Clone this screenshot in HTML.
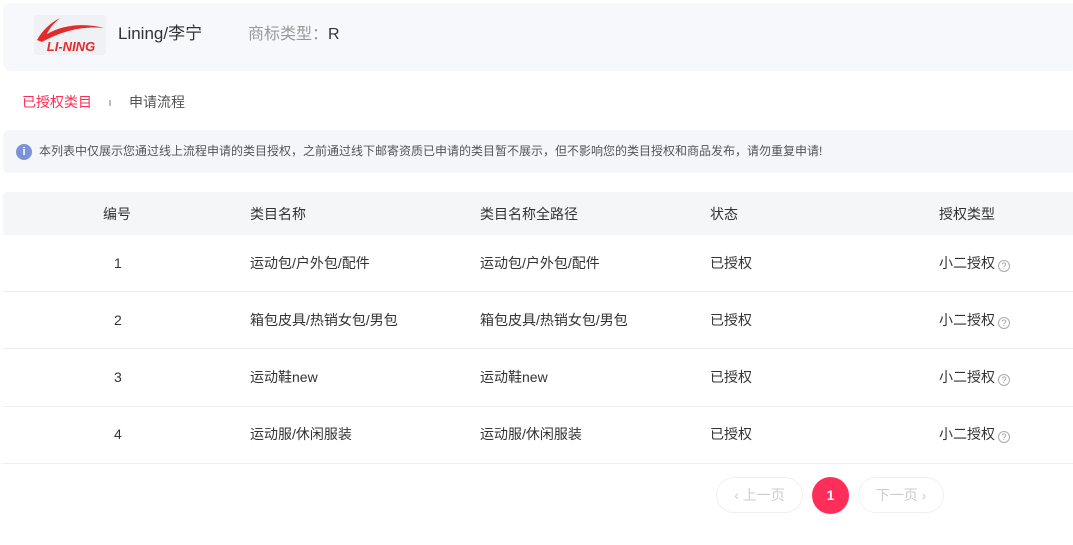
<!DOCTYPE html>
<html><head><meta charset="utf-8"><style>
*{margin:0;padding:0;box-sizing:border-box}
body{width:1073px;height:545px;background:#fff;font-family:"Liberation Sans","Noto Sans CJK SC",sans-serif;color:#333;position:relative;overflow:hidden}
.hdr{position:absolute;left:3px;top:3px;width:1075px;height:68px;background:#f7f8fb;border-radius:8px}
.logo{position:absolute;left:34px;top:15px;width:72px;height:40px;background:#f0f1f4;border-radius:3px}
.abs{position:absolute;white-space:nowrap;line-height:1.2}
.info{position:absolute;left:3px;top:130px;width:1075px;height:43px;background:#f5f6f9;border-radius:6px}
.th{position:absolute;left:3px;top:192px;width:1075px;height:43px;background:#f5f6f8;border-radius:4px 0 0 0}
.row{position:absolute;left:3px;width:1075px;height:57px;border-bottom:1px solid #eee}
.c{position:absolute;font-size:14px;color:#333;line-height:20px;height:20px}
.q{display:inline-block;width:12px;height:12px;border:1px solid #aaa;border-radius:50%;font-size:9px;line-height:10px;text-align:center;color:#999;vertical-align:-1px;margin-left:3px}
.pb{position:absolute;top:477px;height:36px;border:1px solid #f0f0f0;border-radius:18px;font-size:14px;color:#ccc;text-align:center;line-height:34px}
</style></head><body>
<div class="hdr"></div>
<div class="logo">
<svg width="72" height="40" viewBox="0 0 72 40"><path d="M3 25 C8 16 16 8 26 3 C19 9 15 14 13 19 C30 9 52 8 70 13 C50 11 30 15 8 27 Z" fill="#e22b2b"/><text x="37" y="36" text-anchor="middle" font-family="Liberation Sans" font-style="italic" font-weight="bold" font-size="13" fill="#e22b2b">LI-NING</text></svg>
</div>
<div class="abs" style="left:118px;top:24px;font-size:17px;color:#333">Lining/李宁</div>
<div class="abs" style="left:248px;top:25px;font-size:16px;color:#999">商标类型：<span style="color:#333">R</span></div>
<div class="abs" style="left:22px;top:94px;font-size:14px;color:#ff2d55">已授权类目</div>
<div class="abs" style="left:109px;top:100px;width:2px;height:6px;background:#bbb"></div>
<div class="abs" style="left:129px;top:94px;font-size:14px;color:#555">申请流程</div>
<div class="info"></div>
<div class="abs" style="left:16px;top:144px;width:16px;height:16px;border-radius:50%;background:#7b93d6;color:#fff;font-size:11px;font-weight:bold;text-align:center;line-height:16px">i</div>
<div class="abs" style="left:39px;top:144px;font-size:12px;color:#555">本列表中仅展示您通过线上流程申请的类目授权，之前通过线下邮寄资质已申请的类目暂不展示，但不影响您的类目授权和商品发布，请勿重复申请!</div>
<div class="th">
<div class="c" style="left:100px;top:12px">编号</div>
<div class="c" style="left:247px;top:12px">类目名称</div>
<div class="c" style="left:477px;top:12px">类目名称全路径</div>
<div class="c" style="left:707px;top:12px">状态</div>
<div class="c" style="left:936px;top:12px">授权类型</div>
</div>
<div class="row" style="top:235px">
<div class="c" style="left:111px;top:18px">1</div><div class="c" style="left:247px;top:18px">运动包/户外包/配件</div><div class="c" style="left:477px;top:18px">运动包/户外包/配件</div><div class="c" style="left:707px;top:18px">已授权</div><div class="c" style="left:936px;top:18px">小二授权<span class="q">?</span></div>
</div>
<div class="row" style="top:292px">
<div class="c" style="left:111px;top:18px">2</div><div class="c" style="left:247px;top:18px">箱包皮具/热销女包/男包</div><div class="c" style="left:477px;top:18px">箱包皮具/热销女包/男包</div><div class="c" style="left:707px;top:18px">已授权</div><div class="c" style="left:936px;top:18px">小二授权<span class="q">?</span></div>
</div>
<div class="row" style="top:350px">
<div class="c" style="left:111px;top:17px">3</div><div class="c" style="left:247px;top:17px">运动鞋new</div><div class="c" style="left:477px;top:17px">运动鞋new</div><div class="c" style="left:707px;top:17px">已授权</div><div class="c" style="left:936px;top:17px">小二授权<span class="q">?</span></div>
</div>
<div class="row" style="top:407px">
<div class="c" style="left:111px;top:17px">4</div><div class="c" style="left:247px;top:17px">运动服/休闲服装</div><div class="c" style="left:477px;top:17px">运动服/休闲服装</div><div class="c" style="left:707px;top:17px">已授权</div><div class="c" style="left:936px;top:17px">小二授权<span class="q">?</span></div>
</div>
<div class="pb" style="left:716px;width:87px">‹ 上一页</div>
<div class="abs" style="left:812px;top:477px;width:37px;height:37px;border-radius:50%;background:#ff2d5a;color:#fff;font-size:14px;font-weight:bold;text-align:center;line-height:37px">1</div>
<div class="pb" style="left:858px;width:86px">下一页 ›</div>
</body></html>
